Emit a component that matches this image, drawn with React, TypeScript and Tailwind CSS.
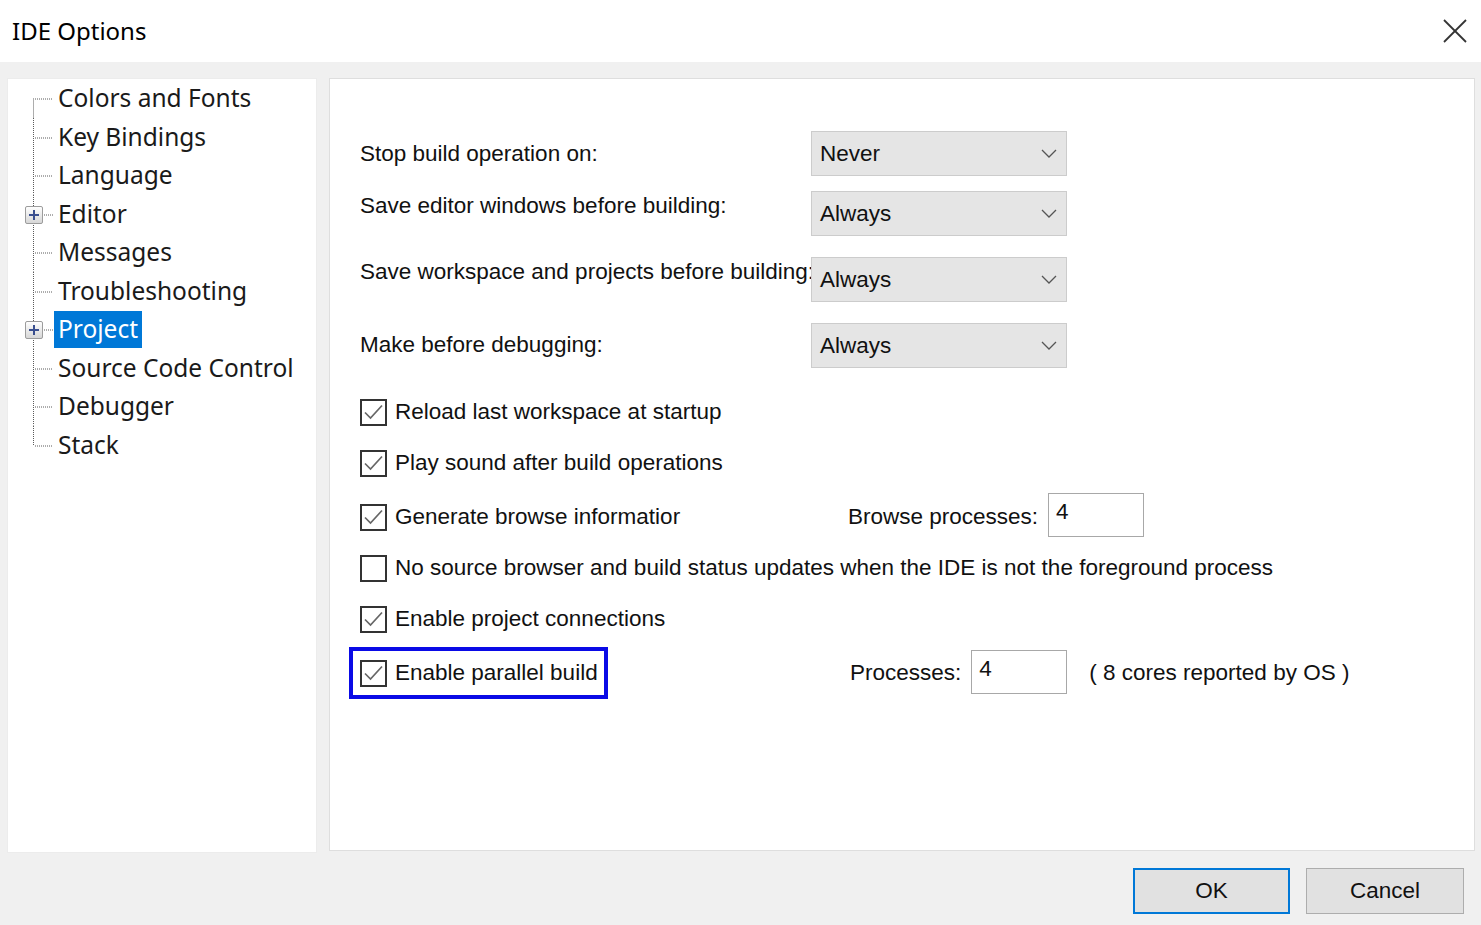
import React from "react";

const tree = [
  { label: "Colors and Fonts" },
  { label: "Key Bindings" },
  { label: "Language" },
  { label: "Editor", expandable: true },
  { label: "Messages" },
  { label: "Troubleshooting" },
  { label: "Project", expandable: true, selected: true },
  { label: "Source Code Control" },
  { label: "Debugger" },
  { label: "Stack" },
];

function Connector({ first, last, expandable }: { first: boolean; last: boolean; expandable?: boolean }) {
  const mid = 19.5;
  return (
    <svg width="46" height="38.5" className="shrink-0" aria-hidden={true}>
      <line
        x1="25.5"
        y1={first ? mid : 0}
        x2="25.5"
        y2={last ? mid : 38.5}
        stroke="#5a5a5a"
        strokeWidth="1"
        strokeDasharray="1 1"
      />
      <line x1={expandable ? 34 : 27} y1={mid + 0.5} x2="45" y2={mid + 0.5} stroke="#5a5a5a" strokeWidth="1" strokeDasharray="1 1" />
      {expandable && (
        <g>
          <defs>
            <linearGradient id="pbox" x1="0" y1="0" x2="0" y2="1">
              <stop offset="0" stopColor="#ffffff" />
              <stop offset="1" stopColor="#d6d6d6" />
            </linearGradient>
          </defs>
          <rect x="17.5" y="11.5" width="17" height="17" rx="1.5" fill="url(#pbox)" stroke="#9c9c9c" />
          <line x1="21" y1="20" x2="31" y2="20" stroke="#3a4f8f" strokeWidth="2" />
          <line x1="26" y1="15" x2="26" y2="25" stroke="#3a4f8f" strokeWidth="2" />
        </g>
      )}
    </svg>
  );
}

function CheckBox({ checked }: { checked: boolean }) {
  return (
    <span className="w-[27px] h-[27px] border-2 border-[#333333] bg-white shrink-0 flex items-center justify-center">
      {checked && (
        <svg width="21" height="21" viewBox="0 0 21 21" aria-hidden={true}>
          <polyline points="2,10.5 7.5,16 19,3.5" fill="none" stroke="#666666" strokeWidth="1.7" />
        </svg>
      )}
    </span>
  );
}

function Select({ value }: { value: string }) {
  return (
    <div className="w-[256px] h-[45px] shrink-0 bg-[#e5e5e5] border border-[#cccccc] flex items-center justify-between pl-[8px] pr-[9px]">
      <span className="text-[22.5px] leading-none text-[#111] mt-[1px]">{value}</span>
      <svg width="16" height="9" viewBox="0 0 16 9" aria-hidden={true}>
        <polyline points="1,1 8,8 15,1" fill="none" stroke="#555" strokeWidth="1.3" />
      </svg>
    </div>
  );
}

function NumberBox({ value }: { value: string }) {
  return (
    <div className="w-[96px] h-[44px] shrink-0 bg-white border border-[#a8a8a8] pl-[7px] pt-[7px]">
      <span className="text-[22.5px] leading-none text-[#111]">{value}</span>
    </div>
  );
}

function CheckRow({ checked, label }: { checked: boolean; label: string }) {
  return (
    <div className="flex items-center gap-[8px] h-[40px]">
      <CheckBox checked={checked} />
      <span className="text-[22.5px] leading-none text-[#111] whitespace-nowrap mt-[1px]">{label}</span>
    </div>
  );
}

export default function App() {
  return (
    <div className="w-[1481px] h-[925px] flex flex-col bg-[#f0f0f0] overflow-hidden" style={{ fontFamily: "'Liberation Sans', Arial, sans-serif" }}>
      {/* title bar */}
      <div className="h-[62px] shrink-0 bg-white flex items-center justify-between pl-[12px] pr-[13px]">
        <span className="text-[24px] text-[#000] font-['Noto_Sans',sans-serif] -mt-[1px]">IDE Options</span>
        <svg width="26" height="26" viewBox="0 0 26 26" aria-hidden={true}>
          <line x1="2" y1="2" x2="24" y2="24" stroke="#333" strokeWidth="1.8" />
          <line x1="24" y1="2" x2="2" y2="24" stroke="#333" strokeWidth="1.8" />
        </svg>
      </div>

      {/* panels */}
      <div className="flex gap-[12px] pl-[7px] pr-[6px] pt-[16px] h-[791px] shrink-0">
        <div className="w-[310px] h-[775px] bg-white border border-[#ececec] font-['Noto_Sans',sans-serif]">
          {tree.map((item, i) => (
            <div key={item.label} className="flex items-center h-[38.5px]">
              <Connector first={i === 0} last={i === tree.length - 1} expandable={item.expandable} />
              <span
                className={
                  item.selected
                    ? "px-[4px] h-[37px] flex items-center bg-[#0078d7] text-white text-[24.5px] leading-none"
                    : "px-[4px] h-[37px] flex items-center text-[#1a1a1a] text-[24.5px] leading-none"
                }
              >
                {item.label}
              </span>
            </div>
          ))}
        </div>

        <div className="flex-1 h-[773px] bg-white border border-[#dedede] pl-[30px] pt-[52px]">
          <div className="flex h-[45px]">
            <span className="w-[451px] shrink-0 mt-[12px] text-[22.5px] leading-none text-[#111]">Stop build operation on:</span>
            <Select value="Never" />
          </div>
          <div className="flex h-[45px] mt-[15px]">
            <span className="w-[451px] shrink-0 mt-[4px] text-[22.5px] leading-none text-[#111]">Save editor windows before building:</span>
            <Select value="Always" />
          </div>
          <div className="flex h-[45px] mt-[21px]">
            <span className="w-[451px] shrink-0 mt-[4px] text-[22.5px] leading-none text-[#111] whitespace-nowrap">Save workspace and projects before building:</span>
            <Select value="Always" />
          </div>
          <div className="flex h-[45px] mt-[21px]">
            <span className="w-[451px] shrink-0 mt-[11px] text-[22.5px] leading-none text-[#111]">Make before debugging:</span>
            <Select value="Always" />
          </div>

          <div className="mt-[24px]">
            <CheckRow checked={true} label="Reload last workspace at startup" />
          </div>
          <div className="mt-[11px]">
            <CheckRow checked={true} label="Play sound after build operations" />
          </div>
          <div className="mt-[14px] flex items-center h-[40px]">
            <div className="w-[488px] shrink-0 overflow-hidden">
              <CheckRow checked={true} label="Generate browse informatior" />
            </div>
            <span className="text-[22.5px] leading-none text-[#111] whitespace-nowrap mt-[1px]">Browse processes:</span>
            <div className="ml-[10px] -mt-[5px]">
              <NumberBox value="4" />
            </div>
          </div>
          <div className="mt-[11px]">
            <CheckRow checked={false} label="No source browser and build status updates when the IDE is not the foreground process" />
          </div>
          <div className="mt-[11px]">
            <CheckRow checked={true} label="Enable project connections" />
          </div>
          <div className="mt-[14px] flex items-center h-[40px]">
            <div className="w-[490px] shrink-0">
              <div className="inline-flex -ml-[11px] h-[52px] items-center border-4 border-[#0a0ae6] pl-[7px] pr-[6px]">
                <CheckRow checked={true} label="Enable parallel build" />
              </div>
            </div>
            <span className="text-[22.5px] leading-none text-[#111] whitespace-nowrap mt-[1px]">Processes:</span>
            <div className="ml-[10px] -mt-[2px]">
              <NumberBox value="4" />
            </div>
            <span className="ml-[22px] text-[22.5px] leading-none text-[#111] whitespace-nowrap mt-[1px]">( 8 cores reported by OS )</span>
          </div>
        </div>
      </div>

      {/* buttons */}
      <div className="flex-1 flex justify-end items-start gap-[16px] pr-[17px] pt-[15px]">
        <button className="w-[157px] h-[46px] bg-[#e1e1e1] border-2 border-[#0078d7] text-[22.5px] text-[#111] flex items-center justify-center">
          OK
        </button>
        <button className="w-[158px] h-[46px] bg-[#e1e1e1] border border-[#adadad] text-[22.5px] text-[#111] flex items-center justify-center">
          Cancel
        </button>
      </div>
    </div>
  );
}
